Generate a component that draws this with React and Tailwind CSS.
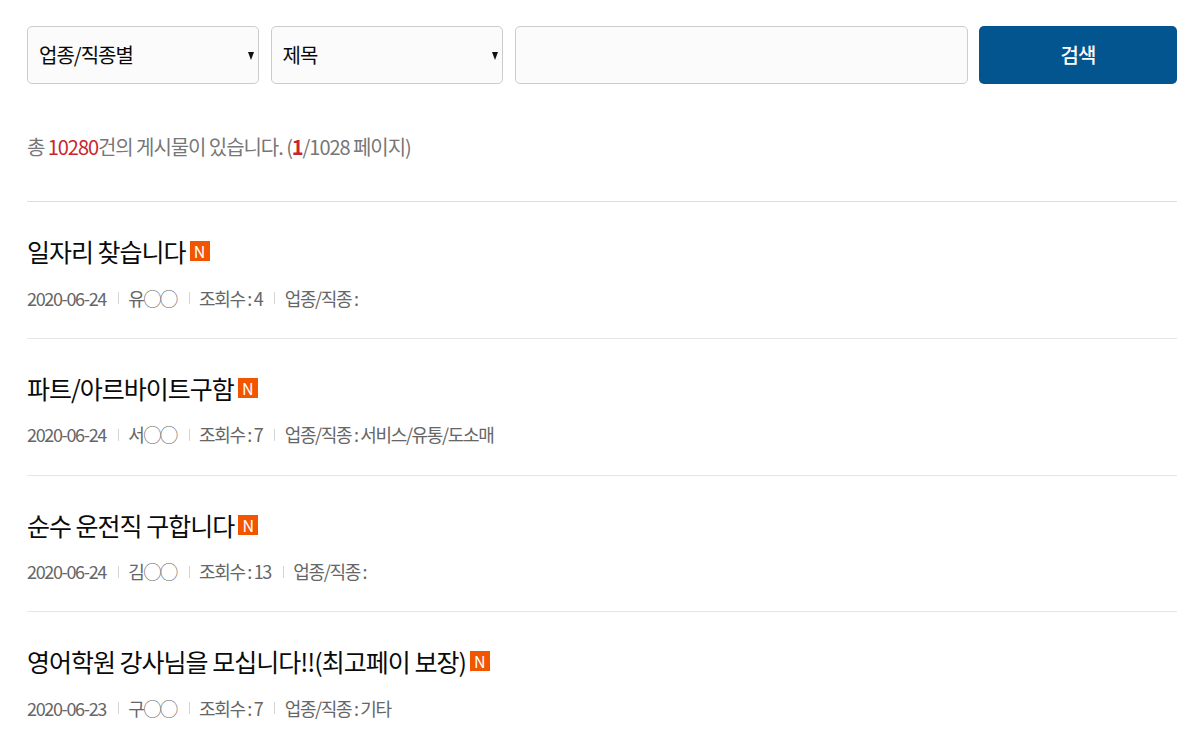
const font = '"Noto Sans CJK KR", "Noto Sans", sans-serif';

const rows = [
  { title: '일자리 찾습니다', date: '2020-06-24', name: '유◯◯', views: 4, job: '' },
  { title: '파트/아르바이트구함', date: '2020-06-24', name: '서◯◯', views: 7, job: '서비스/유통/도소매' },
  { title: '순수 운전직 구합니다', date: '2020-06-24', name: '김◯◯', views: 13, job: '' },
  { title: '영어학원 강사님을 모십니다!!(최고페이 보장)', date: '2020-06-23', name: '구◯◯', views: 7, job: '기타' },
];

function Select({ label }) {
  return (
    <div className="relative flex h-[58px] w-[232px] shrink-0 items-center rounded-[5px] border border-[#cccccc] bg-[#fbfbfb] pl-[11px] text-[20px] tracking-[-1px] text-[#0a0a0a]">
      <span>{label}</span>
      <span className="absolute right-[4px] top-[25px] h-0 w-0 border-x-[3.5px] border-t-[8px] border-x-transparent border-t-[#111111]" />
    </div>
  );
}

function Sep() {
  return <span className="ml-[11.9px] mr-[9.43px] h-[12px] w-px bg-[#d5d5d5]" />;
}

function Row({ row }) {
  return (
    <li className="h-[136.8px] border-b border-[#e6e6e6] pt-[31px]">
      <div className="flex h-[36px] items-center text-[25px] leading-[36px] tracking-[-1px] text-[#0a0a0a]">
        <span>{row.title}</span>
        <span className="ml-[4px] flex h-[20px] w-[20px] items-center justify-center bg-[#f25500] text-[16px] leading-none tracking-normal text-white">N</span>
      </div>
      <div className="mt-[17px] flex h-[24px] items-center text-[18px] tracking-[-1.35px] text-[#666666]">
        <span>{row.date}</span>
        <Sep />
        <span>{row.name}</span>
        <Sep />
        <span>조회수 : {row.views}</span>
        <Sep />
        <span>업종/직종 : {row.job}</span>
      </div>
    </li>
  );
}

export default function App() {
  return (
    <div className="h-[736px] overflow-hidden bg-white pl-[27px] pr-[13px] pt-[26px]" style={{ fontFamily: font }}>
      <div className="flex h-[58px] items-stretch">
        <Select label="업종/직종별" />
        <div className="ml-[11.6px]"><Select label="제목" /></div>
        <div className="ml-[12.4px] h-[58px] w-[453px] rounded-[5px] border border-[#cccccc] bg-[#fbfbfb]" />
        <button className="ml-[11px] flex h-[58px] w-[198px] items-center justify-center rounded-[5px] bg-[#02558f] text-[20px] font-medium tracking-[-1px] text-white">검색</button>
      </div>
      <p className="mt-[49px] h-[28px] text-[20px] leading-[28px] tracking-[-1.06px] text-[#777777]">
        총 <span className="text-[#c9252d]">10280</span>건의 게시물이 있습니다. (<strong className="font-bold text-[#c9252d]">1</strong>/1028 페이지)
      </p>
      <ul className="mt-[40px] border-t border-[#dddddd]">
        {rows.map((r) => <Row key={r.title} row={r} />)}
      </ul>
    </div>
  );
}
